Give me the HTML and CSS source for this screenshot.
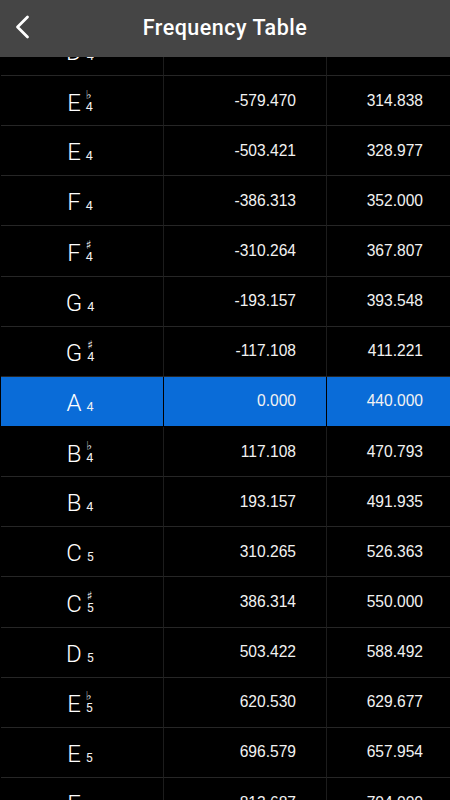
FILE: index.html
```html
<!DOCTYPE html>
<html lang="en">
<head>
<meta charset="utf-8">
<title>Frequency Table</title>
<link rel="stylesheet" href="styles.css">
</head>
<body>
<header class="navbar">
  <span class="back" aria-label="Back">
    <svg width="20" height="24" viewBox="0 0 20 24"><path d="M12.5 2 L2.5 12 L12.5 22" fill="none" stroke="#fff" stroke-width="2.8" stroke-linecap="round" stroke-linejoin="round"/></svg>
  </span>
  <h1 class="title">Frequency Table</h1>
</header>
<main class="table">
  <div class="row"><div class="cell note"><span class="mark"><span class="letter">D</span><span class="acc"><span class="sub">4</span></span></span></div><div class="cell num">-701.955</div><div class="cell num last">293.333</div></div>
  <div class="row"><div class="cell note"><span class="mark"><span class="letter">E</span><span class="acc"><span class="sup">♭</span><span class="sub">4</span></span></span></div><div class="cell num">-579.470</div><div class="cell num last">314.838</div></div>
  <div class="row"><div class="cell note"><span class="mark"><span class="letter">E</span><span class="acc"><span class="sub">4</span></span></span></div><div class="cell num">-503.421</div><div class="cell num last">328.977</div></div>
  <div class="row"><div class="cell note"><span class="mark"><span class="letter">F</span><span class="acc"><span class="sub">4</span></span></span></div><div class="cell num">-386.313</div><div class="cell num last">352.000</div></div>
  <div class="row"><div class="cell note"><span class="mark"><span class="letter">F</span><span class="acc"><span class="sup">♯</span><span class="sub">4</span></span></span></div><div class="cell num">-310.264</div><div class="cell num last">367.807</div></div>
  <div class="row"><div class="cell note"><span class="mark"><span class="letter">G</span><span class="acc"><span class="sub">4</span></span></span></div><div class="cell num">-193.157</div><div class="cell num last">393.548</div></div>
  <div class="row"><div class="cell note"><span class="mark"><span class="letter">G</span><span class="acc"><span class="sup">♯</span><span class="sub">4</span></span></span></div><div class="cell num">-117.108</div><div class="cell num last">411.221</div></div>
  <div class="row selected"><div class="cell note"><span class="mark"><span class="letter">A</span><span class="acc"><span class="sub">4</span></span></span></div><div class="cell num">0.000</div><div class="cell num last">440.000</div></div>
  <div class="row"><div class="cell note"><span class="mark"><span class="letter">B</span><span class="acc"><span class="sup">♭</span><span class="sub">4</span></span></span></div><div class="cell num">117.108</div><div class="cell num last">470.793</div></div>
  <div class="row"><div class="cell note"><span class="mark"><span class="letter">B</span><span class="acc"><span class="sub">4</span></span></span></div><div class="cell num">193.157</div><div class="cell num last">491.935</div></div>
  <div class="row"><div class="cell note"><span class="mark"><span class="letter">C</span><span class="acc"><span class="sub">5</span></span></span></div><div class="cell num">310.265</div><div class="cell num last">526.363</div></div>
  <div class="row"><div class="cell note"><span class="mark"><span class="letter">C</span><span class="acc"><span class="sup">♯</span><span class="sub">5</span></span></span></div><div class="cell num">386.314</div><div class="cell num last">550.000</div></div>
  <div class="row"><div class="cell note"><span class="mark"><span class="letter">D</span><span class="acc"><span class="sub">5</span></span></span></div><div class="cell num">503.422</div><div class="cell num last">588.492</div></div>
  <div class="row"><div class="cell note"><span class="mark"><span class="letter">E</span><span class="acc"><span class="sup">♭</span><span class="sub">5</span></span></span></div><div class="cell num">620.530</div><div class="cell num last">629.677</div></div>
  <div class="row"><div class="cell note"><span class="mark"><span class="letter">E</span><span class="acc"><span class="sub">5</span></span></span></div><div class="cell num">696.579</div><div class="cell num last">657.954</div></div>
  <div class="row"><div class="cell note"><span class="mark"><span class="letter">F</span><span class="acc"><span class="sub">5</span></span></span></div><div class="cell num">813.687</div><div class="cell num last">704.000</div></div>
</main>
</body>
</html>
```

FILE: styles.css
```css
html, body {
  margin: 0;
  padding: 0;
  background: #000;
  height: 800px;
  overflow: hidden;
}

body {
  font-family: "Liberation Sans", Arial, sans-serif;
  color: #f2f2f2;
}

.navbar {
  position: fixed;
  top: 0;
  left: 0;
  right: 0;
  height: 57px;
  background: #454545;
  display: flex;
  align-items: center;
  justify-content: center;
  z-index: 10;
}

.back {
  position: absolute;
  left: 15px;
  top: 15px;
  width: 20px;
  height: 24px;
  display: block;
}

.back svg {
  display: block;
}

.title {
  margin: -1px 0 0 0;
  font-family: Roboto, "Liberation Sans", sans-serif;
  font-weight: 500;
  font-size: 21.5px;
  color: #fff;
  letter-spacing: 0.5px;
  line-height: 1;
}

.table {
  padding-top: 25.85px;
}

.row {
  display: grid;
  grid-template-columns: 163px 163px 1fr;
  height: 50.15px;
  padding-left: 1px;
  box-sizing: border-box;
}

.cell {
  border-bottom: 1px solid #262626;
  border-right: 1px solid #1c1c1c;
  display: flex;
  align-items: center;
  box-sizing: border-box;
}

.cell.last {
  border-right: none;
}

.num {
  justify-content: flex-end;
  padding-right: 30px;
  font-size: 15.6px;
}

.num.last {
  padding-right: 27px;
}

.note {
  justify-content: center;
  padding-right: 4px;
}

.mark {
  display: block;
  white-space: nowrap;
  line-height: 1;
  margin-top: 3px;
}

.letter {
  font-family: Roboto, "Liberation Sans", sans-serif;
  font-weight: 300;
  font-size: 24px;
  color: #fff;
  vertical-align: baseline;
}

.acc {
  display: inline-block;
  vertical-align: baseline;
  margin-left: 5px;
}

.sup {
  display: block;
  font-family: "DejaVu Sans", sans-serif;
  font-size: 12px;
  line-height: 10px;
  margin-bottom: 2px;
  color: #f2f2f2;
}

.sub {
  display: block;
  font-family: Roboto, "Liberation Sans", sans-serif;
  font-size: 12.5px;
  line-height: 10px;
  color: #f2f2f2;
}

.row.selected .cell {
  background: #0a6cd8;
  border-bottom-color: #000;
  border-right-color: #000;
}
```
